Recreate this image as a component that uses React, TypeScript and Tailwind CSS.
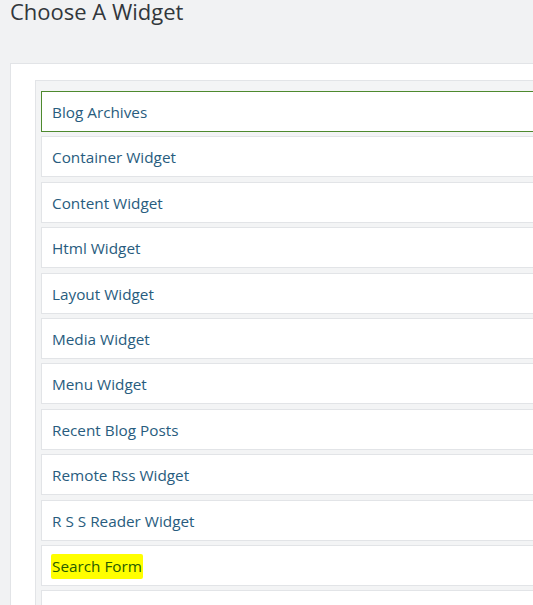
const widgets = [
  "Blog Archives",
  "Container Widget",
  "Content Widget",
  "Html Widget",
  "Layout Widget",
  "Media Widget",
  "Menu Widget",
  "Recent Blog Posts",
  "Remote Rss Widget",
  "R S S Reader Widget",
  "Search Form",
  "",
];

export default function App() {
  return (
    <div
      className="h-[605px] w-[533px] overflow-hidden bg-[#f1f2f3]"
      style={{ fontFamily: "'Open Sans', 'Noto Sans', sans-serif" }}
    >
      {/* Heading */}
      <h1 className="ml-[10px] pt-[1px] text-[22px] leading-[20px] text-[#32373c]">Choose A Widget</h1>

      {/* Panel */}
      <div className="ml-[10px] mt-[42px] w-[620px] border border-[#e2e4e7] bg-white pl-[24px] pt-[16px]">
        <div className="flex flex-col gap-[4.4px] border border-[#e2e4e7] bg-[#f3f4f5] pl-[5px] pt-[10px]">
          {widgets.map((name, idx) => (
            <div
              key={idx}
              className={
                idx === 0
                  ? "flex h-[41px] items-center border border-[#4e8a2e] bg-white pl-[10px] pt-[2px]"
                  : "flex h-[41px] items-center border border-[#e2e4e7] bg-white pl-[10px] pt-[2px]"
              }
            >
              {name === "Search Form" ? (
                <span className="-ml-[1px] rounded-[2px] bg-[#ffff00] px-[1px] py-[2px] text-[15.3px] leading-[21px] text-[#285c00]">
                  {name}
                </span>
              ) : (
                <span className="text-[15.3px] text-[#285c7e]">{name}</span>
              )}
            </div>
          ))}
        </div>
      </div>
    </div>
  );
}
